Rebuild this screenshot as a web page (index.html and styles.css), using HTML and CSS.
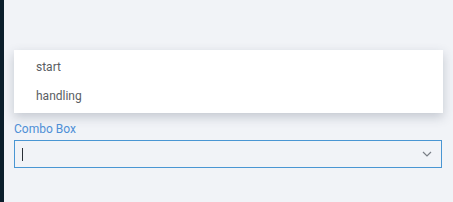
FILE: index.html
```html
<!DOCTYPE html>
<html lang="en">
<head>
    <meta charset="UTF-8">
    <title>Combo Box</title>
    <link rel="stylesheet" href="styles.css">
</head>
<body>
    <div class="layout">
        <div class="sidebar"></div>
        <div class="main">
            <ul class="menu">
                <li class="menu-item">start</li>
                <li class="menu-item">handling</li>
            </ul>
            <label class="field-label">Combo Box</label>
            <div class="combo">
                <span class="caret"></span>
                <svg class="chevron" width="10" height="6" viewBox="0 0 10 6">
                    <path d="M1 1 L5 5 L9 1" fill="none" stroke="#7a7f87" stroke-width="1.2"/>
                </svg>
            </div>
        </div>
    </div>
</body>
</html>
```

FILE: styles.css
```css
* {
    margin: 0;
    padding: 0;
    box-sizing: border-box;
    font-family: 'Roboto', 'Liberation Sans', sans-serif;
}

body {
    background: #f1f3f7;
    width: 453px;
    height: 202px;
    overflow: hidden;
}

.layout {
    display: flex;
    height: 202px;
}

.sidebar {
    width: 4px;
    background: #0b1e2b;
}

.main {
    flex: 1;
    padding: 50px 10px 0 10px;
}

.menu {
    list-style: none;
    background: #fff;
    width: 429px;
    padding: 3px 0 2px;
    box-shadow: 0 4px 10px rgba(60, 70, 90, 0.25);
}

.menu-item {
    height: 29px;
    line-height: 29px;
    padding-left: 22px;
    font-size: 12px;
    color: #5a5e63;
}

.field-label {
    display: block;
    margin-top: 8px;
    font-size: 12px;
    line-height: 16px;
    color: #4e8fd6;
}

.combo {
    margin-top: 3px;
    width: 428px;
    height: 28px;
    border: 1px solid #4996d3;
    display: flex;
    align-items: center;
    justify-content: space-between;
    padding: 0 9px 0 7px;
}

.caret {
    width: 1px;
    height: 13px;
    background: #2a2f36;
}

.chevron {
    display: block;
}
```
